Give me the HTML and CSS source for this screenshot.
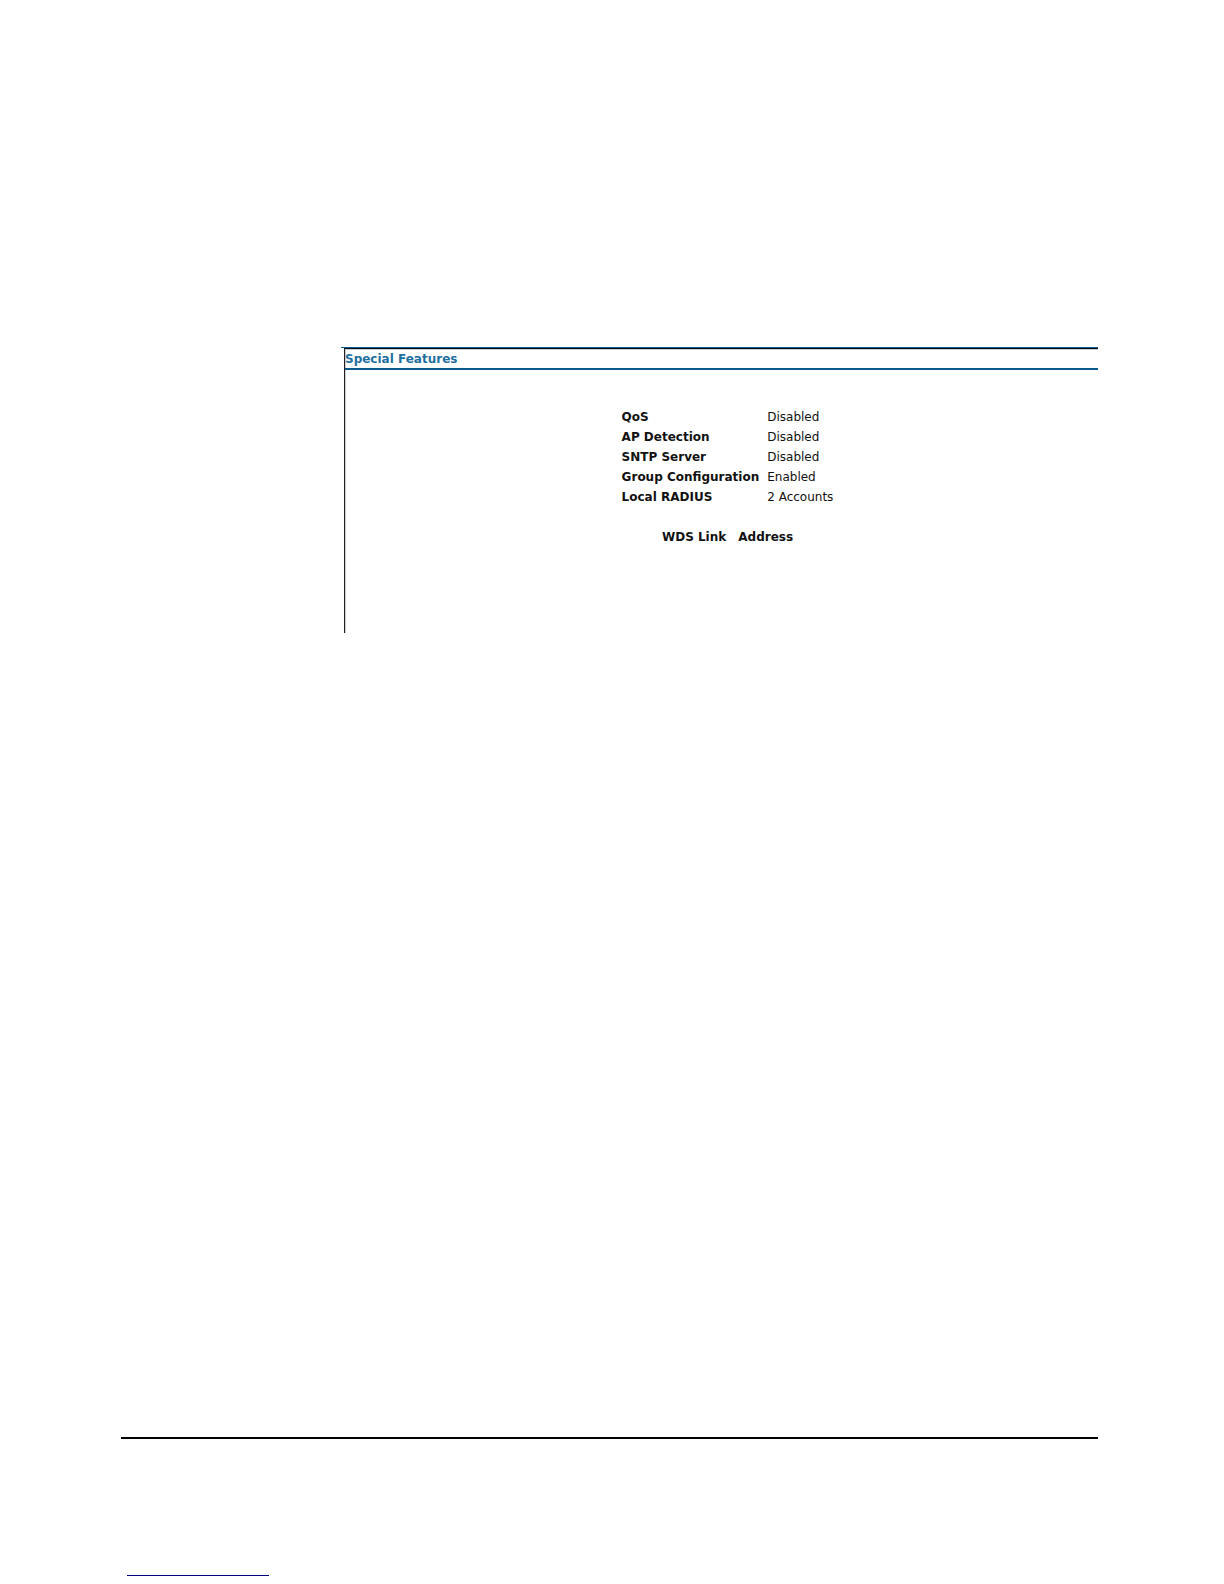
FILE: index.html
```
<!doctype html>
<html lang="en">

<head>
    <meta charset="utf-8">
    <meta name="viewport" content="width=device-width, initial-scale=1">
    <title>Special Features</title>
    <link rel="stylesheet" href="styles.css">
</head>

<body>
    <main>
        <section class="panel">
            <div class="panel-body">
                <h1>Special Features</h1>
                <div class="summary">
                    <table class="features">
                        <tr>
                            <th scope="row">QoS</th>
                            <td>Disabled</td>
                        </tr>
                        <tr>
                            <th scope="row">AP Detection</th>
                            <td>Disabled</td>
                        </tr>
                        <tr>
                            <th scope="row">SNTP Server</th>
                            <td>Disabled</td>
                        </tr>
                        <tr>
                            <th scope="row">Group Configuration</th>
                            <td>Enabled</td>
                        </tr>
                        <tr>
                            <th scope="row">Local RADIUS</th>
                            <td>2 Accounts</td>
                        </tr>
                    </table>
                    <table class="wds">
                        <tr>
                            <th scope="col">WDS Link</th>
                            <th scope="col">Address</th>
                        </tr>
                    </table>
                </div>
            </div>
        </section>
    </main>
    <footer>
        <div class="footer-link"></div>
    </footer>
</body>

</html>
```

FILE: styles.css
```
body {
    display: flex;
    flex-direction: column;
    box-sizing: border-box;
    min-height: 100vh;
    margin: 0;
    padding: 347px 126px 8px 121px;
    font-family: Verdana, "DejaVu Sans", sans-serif;
    font-size: 12px;
    line-height: 16px;
    color: #111;
    background: #fff;
}

.panel {
    margin-left: 220px;
    border-top: 1px solid #0a5a8c;
}

.panel-body {
    margin-left: 3px;
    border-top: 1px solid #0a0a1e;
    border-left: 1px solid #222;
    box-shadow: inset 1px 1px #ccc;
}

h1 {
    margin: 0;
    padding-top: 1px;
    border-bottom: 2px solid #0a5a8c;
    font-size: 12px;
    line-height: 18px;
    color: #1f6f9f;
}

.summary {
    padding: 37px 0 86px 12px;
}

table {
    margin: 0 auto;
    border-collapse: collapse;
}

th,
td {
    padding: 2px 4px;
    text-align: left;
    white-space: nowrap;
}

.features {
    margin-bottom: 20px;
}

.wds th {
    padding: 2px 6px;
}

footer {
    display: flex;
    align-items: flex-end;
    height: 137px;
    margin-top: auto;
    border-top: 2px solid #000;
}

.footer-link {
    width: 142px;
    margin-left: 6px;
    border-bottom: 1px solid #000080;
}
```
